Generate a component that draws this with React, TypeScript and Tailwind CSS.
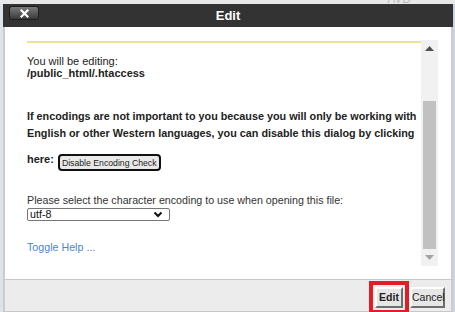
import React from "react";

export default function App() {
  return (
    <div className="w-[455px] h-[312px] overflow-hidden flex flex-col bg-[#e8e8e8] font-['Liberation_Sans',Arial,sans-serif]">
      <div className="h-[4px] shrink-0 bg-[#e8e8e8] flex justify-end pr-[44px] overflow-hidden">
        <span className="text-[12px] leading-[12px] -mt-[7px] text-[#b9bec4]">AVD</span>
      </div>
      <div className="flex flex-1 min-h-0">
        <div className="w-[3px] bg-[#dde3ea]" />
        <div className="w-[450px] flex flex-col">
          {/* title bar */}
          <div className="h-[23px] shrink-0 bg-[#333333] flex items-start pt-[2px] px-[6px]">
            <div className="w-[30px] h-[14px] rounded-[3px] border border-[#1e1e1e] bg-gradient-to-b from-[#7a7a7a] via-[#5a5a5a] to-[#3a3a3a] flex items-center justify-center">
              <svg width="9" height="9" viewBox="0 0 9 9">
                <path d="M1.5 1.5 L7.5 7.5 M7.5 1.5 L1.5 7.5" stroke="#ffffff" strokeWidth="2.2" strokeLinecap="square" />
              </svg>
            </div>
            <div className="flex-1 text-center text-white font-bold text-[13px] leading-[19px]">Edit</div>
            <div className="w-[30px]" />
          </div>
          {/* body */}
          <div className="h-[252px] shrink-0 bg-white border-x-2 border-[#cccccc] pt-[13px] pb-[13px] pl-[22px] pr-[13px]">
            <div className="flex h-full">
              <div className="flex-1 overflow-hidden text-[#222222]">
                <div className="mt-[1px] h-[2px] bg-[#ebe293]" />
                <div className="mt-[12px] text-[11px] leading-[12px]">You will be editing:</div>
                <div className="text-[11px] leading-[12px] font-bold">/public_html/.htaccess</div>
                <div className="mt-[29px] text-[10.8px] leading-[17px] font-bold whitespace-nowrap">
                  If encodings are not important to you because you will only be working with
                  <br />
                  English or other Western languages, you can disable this dialog by clicking
                </div>
                <div className="mt-[11px] flex items-start">
                  <span className="text-[11px] leading-[13px] font-bold">here:</span>
                  <button className="ml-[4px] mt-[1px] h-[17px] px-[2px] rounded-[4px] border-2 border-[#111111] bg-[#e9e9e9] text-[8.7px] leading-[12px] text-[#222222] whitespace-nowrap">
                    Disable Encoding Check
                  </button>
                </div>
                <div className="mt-[23px] text-[10.7px] leading-[13px] text-[#333333]">
                  Please select the character encoding to use when opening this file:
                </div>
                <div className="mt-[1px] w-[143px] h-[13px] border border-[#767676] rounded-[2px] flex items-center justify-between pl-[2px] pr-[6px]">
                  <span className="text-[10.7px] leading-[11px] text-[#111111]">utf-8</span>
                  <svg width="10" height="7" viewBox="0 0 10 7">
                    <path d="M1.5 1.5 L5 5 L8.5 1.5" stroke="#111111" strokeWidth="2" fill="none" />
                  </svg>
                </div>
                <div className="mt-[20px] text-[10.7px] leading-[13px] text-[#4a86c8]">Toggle Help ...</div>
              </div>
              {/* scrollbar */}
              <div className="w-[17px] bg-[#f1f1f1] flex flex-col">
                <div className="h-[17px] flex items-center justify-center">
                  <svg width="9" height="5" viewBox="0 0 9 5"><path d="M0 5 L4.5 0 L9 5 Z" fill="#505050" /></svg>
                </div>
                <div className="flex-1 px-[2px] pt-[44px]">
                  <div className="h-full bg-[#c1c1c1]" />
                </div>
                <div className="h-[17px] flex items-center justify-center">
                  <svg width="9" height="5" viewBox="0 0 9 5"><path d="M0 0 L4.5 5 L9 0 Z" fill="#a3a3a3" /></svg>
                </div>
              </div>
            </div>
          </div>
          {/* footer */}
          <div className="flex-1 bg-[#ececec] border-x-2 border-[#cccccc] border-t border-t-[#c8c8c8] border-b border-b-[#c8c8c8] flex items-start justify-end pt-[7px] pr-[6px] gap-[7px]">
            <button className="w-[28px] h-[21px] p-0 bg-[#e6e6e6] border-2 border-t-white border-l-white border-r-[#6e6e6e] border-b-[#6e6e6e] text-[10.5px] leading-[15px] font-bold text-[#222222] outline-4 outline-[#e31c25] outline-offset-2">
              Edit
            </button>
            <button className="w-[35px] h-[21px] p-0 bg-[#e6e6e6] border-2 border-t-white border-l-white border-r-[#6e6e6e] border-b-[#6e6e6e] text-[10.5px] leading-[15px] text-[#222222]">
              Cancel
            </button>
          </div>
        </div>
        <div className="w-[2px] bg-[#c8d6e4]" />
      </div>
    </div>
  );
}
